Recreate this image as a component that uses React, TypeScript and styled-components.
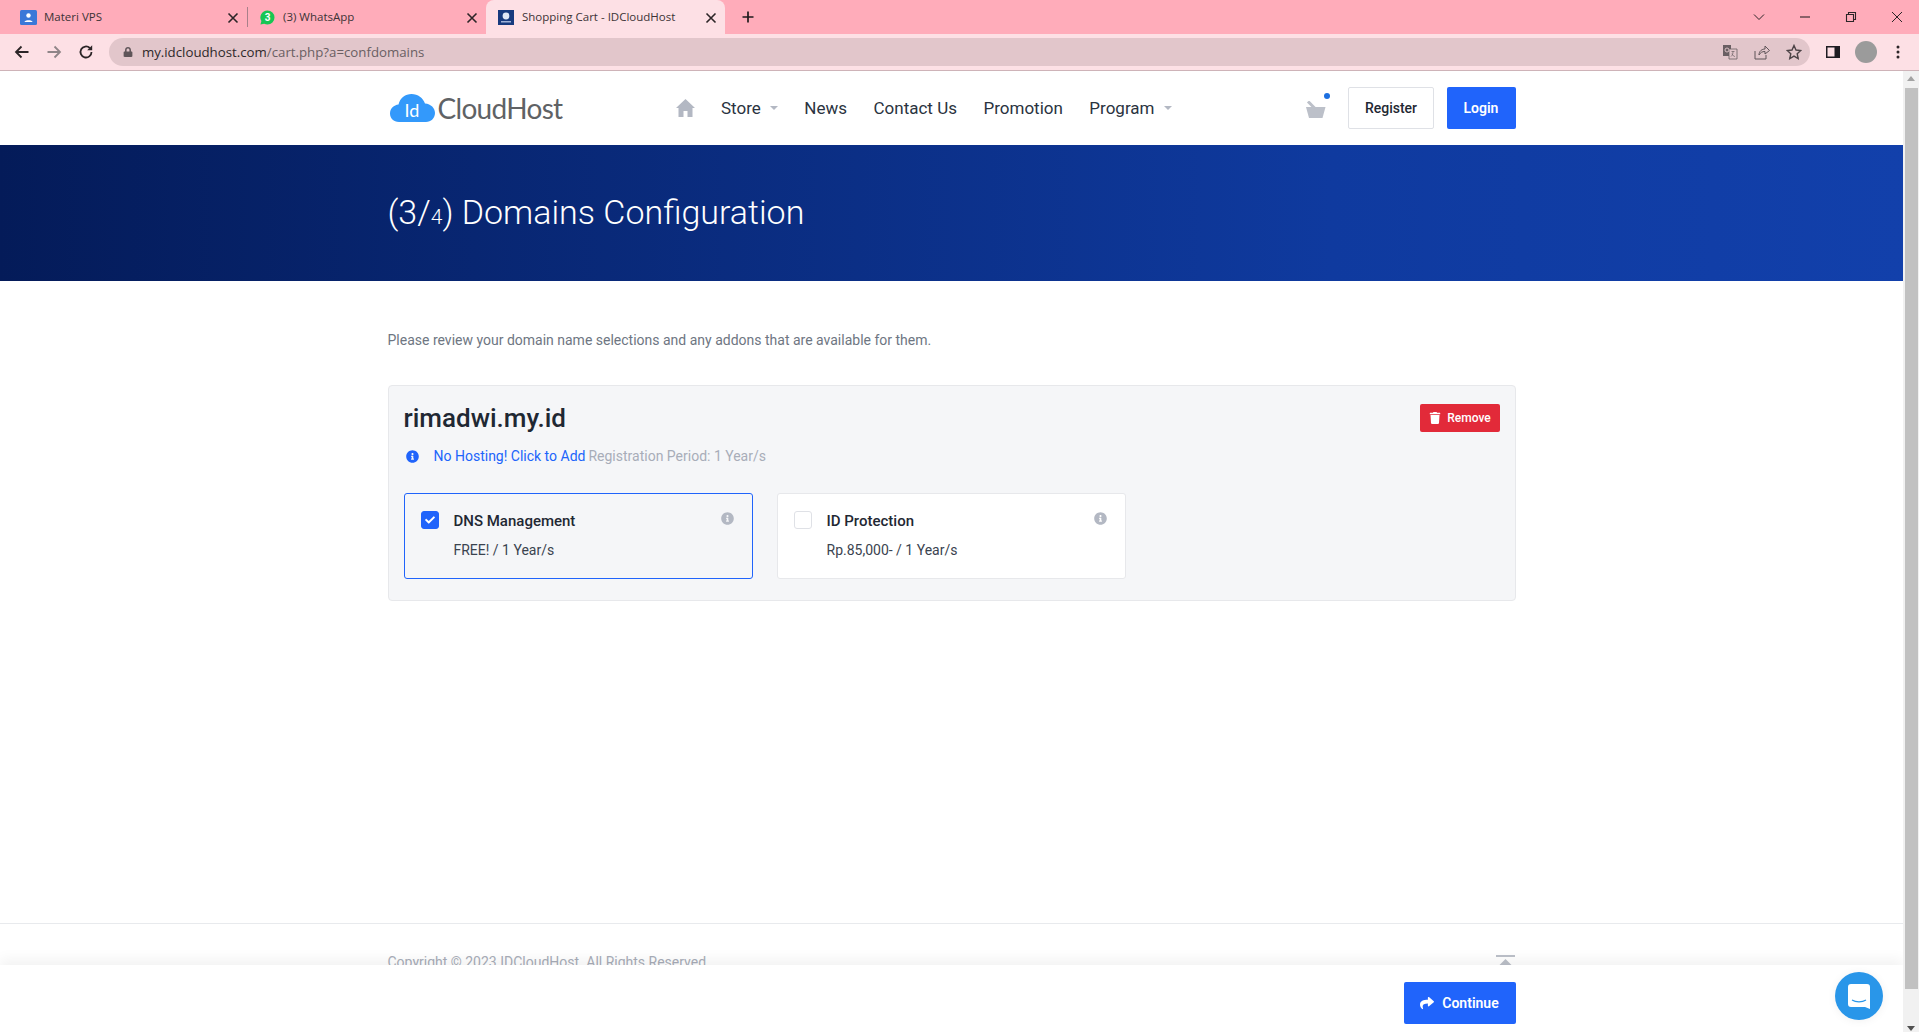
import React from "react";
import styled, { createGlobalStyle } from "styled-components";
import { FaInfoCircle, FaTrash, FaShare, FaCheck, FaLock } from "react-icons/fa";

const Global = createGlobalStyle`
  html, body { margin: 0; padding: 0; height: 100%; overflow: hidden; background: #fff; }
  * { box-sizing: border-box; }
  body { font-family: Roboto, "Liberation Sans", sans-serif; }
`;

const Window = styled.div`
  width: 1919px; height: 1032px; display: flex; flex-direction: column; overflow: hidden;
`;

const TabStrip = styled.div`
  height: 34px; flex: none; background: #ffacba; display: flex; align-items: flex-end; padding-left: 8px;
  font-family: "Open Sans", "Liberation Sans", sans-serif;
`;
const Tab = styled.div<{ $active?: boolean; $width: number; $gap: number }>`
  width: ${p => p.$width}px; height: 34px; display: flex; align-items: center; padding-left: 12px; padding-right: 10px;
  gap: ${p => p.$gap}px; font-size: 11.5px; color: #3c3336; flex: none; position: relative;
  background: ${p => (p.$active ? "#fde0e5" : "transparent")};
  border-radius: ${p => (p.$active ? "8px 8px 0 0" : "0")};
`;
const TabTitle = styled.span`
  flex: 1; white-space: nowrap; overflow: hidden; margin-top: -2px;
`;
const TabClose = styled.span`
  width: 10px; height: 10px; display: flex; flex: none;
`;
const TabDivider = styled.span`
  width: 1px; height: 20px; background: #a8808a; flex: none; align-self: center;
`;
const NewTab = styled.span`
  margin-left: 17px; align-self: center; display: flex;
`;
const WindowControls = styled.div`
  margin-left: auto; display: flex; height: 34px; align-items: center; padding-right: 16px; gap: 34px;
`;
const ControlIcon = styled.svg`
  width: 12px; height: 12px; flex: none; display: block;
`;

const Toolbar = styled.div`
  height: 37px; flex: none; background: #fde0e5; border-bottom: 1px solid #ceb3b8; display: flex; align-items: center;
  padding: 0 13px;
`;
const NavIcons = styled.div`
  display: flex; gap: 16px; align-items: center; width: 96px; padding-left: 1px;
`;
const ToolIcon = styled.svg`
  width: 16px; height: 16px; display: block; flex: none;
`;
const Omnibox = styled.div`
  width: 1703px; height: 28px; border-radius: 14px; background: #e2c6cb; display: flex; align-items: center;
  padding: 0 8px 0 14px; color: #3e3538; font-family: "Open Sans", "Liberation Sans", sans-serif; font-size: 13.25px;
`;
const LockWrap = styled.span`
  display: flex; color: #5f5559; font-size: 10px; margin-right: 9px;
`;
const UrlHost = styled.span` color: #2e282a; `;
const UrlPath = styled.span` color: #6a5f63; `;
const OmniIcons = styled.div`
  margin-left: auto; display: flex; align-items: center; gap: 16px; color: #5f5559;
`;
const ToolbarRight = styled.div`
  display: flex; align-items: center; margin-left: 15px;
`;
const Avatar = styled.span`
  width: 22px; height: 22px; border-radius: 50%; background: #9b9b9b; margin: 0 13px 0 14px; flex: none;
`;

const Viewport = styled.div`
  flex: 1; display: flex; min-height: 0;
`;
const Page = styled.div`
  flex: 1; position: relative; overflow: hidden; background: #fff; color: #1f2833;
`;
const Scrollbar = styled.div`
  width: 16px; flex: none; background: #f1f1f1; display: flex; flex-direction: column; align-items: center; padding-top: 5px;
`;
const ScrollArrowUp = styled.span`
  width: 0; height: 0; border-left: 4px solid transparent; border-right: 4px solid transparent; border-bottom: 5px solid #a3a3a3; flex: none;
`;
const ScrollThumb = styled.span`
  width: 13px; height: 901px; background: #c1c1c1; margin-top: 7px; flex: none; margin-left: 1px;
`;
const ScrollArrowDown = styled.span`
  width: 0; height: 0; border-left: 4px solid transparent; border-right: 4px solid transparent; border-top: 5px solid #505050; margin-top: auto; flex: none; margin-bottom: 1px;
`;

const Container = styled.div`
  width: 1128px; margin: 0 auto;
`;
const HeaderBar = styled.header`
  height: 74px;
`;
const HeaderInner = styled(Container)`
  height: 100%; display: flex; align-items: center;
`;
const Logo = styled.div`
  width: 177px; display: flex; align-items: center; flex: none; padding-left: 2px; margin-bottom: 1px;
`;
const LogoWord = styled.span`
  font-family: Lato, "Open Sans", sans-serif; font-size: 28px; color: #5f6265; letter-spacing: -0.7px; margin-left: 3px; font-weight: 400; line-height: 1;
`;
const Nav = styled.nav`
  display: flex; align-items: center; margin-left: 111px; gap: 26.5px; font-size: 17px; color: #2a3340;
`;
const NavItem = styled.span`
  display: flex; align-items: center; white-space: nowrap;
`;
const HomeGlyph = styled.svg`
  width: 19px; height: 18px; display: block;
`;
const Caret = styled.span`
  width: 0; height: 0; border-left: 4px solid transparent; border-right: 4px solid transparent; border-top: 4px solid #b3b8c3; margin-left: 9px;
`;
const HeaderRight = styled.div`
  margin-left: auto; display: flex; align-items: center;
`;
const CartWrap = styled.span`
  position: relative; width: 20px; height: 17px; margin-right: 22px; display: block; margin-top: 3px;
`;
const CartDot = styled.span`
  position: absolute; right: -4px; top: -8px; width: 6px; height: 6px; border-radius: 50%; background: #1c6fe0;
`;
const OutlineButton = styled.span`
  width: 86px; height: 42px; background: #fff; border: 1px solid #dfe1e6; border-radius: 2px; display: flex; align-items: center; justify-content: center;
  font-size: 14px; font-weight: 500; color: #1f2833; margin-right: 13px; padding: 0 0 1px 1px;
`;
const PrimaryButton = styled.span<{ $width: number }>`
  width: ${p => p.$width}px; height: 42px; background: #2064fb; border-radius: 2px; display: flex; align-items: center; justify-content: center; gap: 8px;
  font-size: 14px; font-weight: 600; color: #fff; padding-bottom: 1px;
`;

const Hero = styled.section`
  height: 136px; background: linear-gradient(90deg, #041b59 0%, #0f3a9f 70%, #1240ab 100%); display: flex; align-items: center; padding-bottom: 2px;
`;
const HeroTitle = styled.h1`
  margin: 0; font-weight: 300; font-size: 34px; color: #fff; line-height: 1; letter-spacing: 0;
`;
const SmallDigit = styled.span`
  font-size: 21px;
`;

const Content = styled.main`
  height: 642px; padding-top: 51px;
`;
const Intro = styled.p`
  margin: 0 0 37px; font-size: 14px; line-height: 16px; color: #6e7682;
`;
const DomainCard = styled.div`
  height: 216px; background: #f5f6f8; border: 1px solid #e7e8eb; border-radius: 4px; padding: 17px 15px 16px;
`;
const DomainHead = styled.div`
  display: flex; justify-content: space-between; align-items: flex-start; height: 31px;
`;
const DomainName = styled.h2`
  margin: 0; font-size: 26px; font-weight: 500; color: #1f2833; line-height: 31px;
`;
const DangerButton = styled.span`
  width: 80px; height: 28px; background: #e22a39; border-radius: 2px; color: #fff; font-size: 12px; font-weight: 500; margin-top: 1px;
  display: flex; align-items: center; justify-content: center; gap: 6px; padding-left: 1px;
`;
const StatusRow = styled.div`
  display: flex; align-items: center; margin-top: 14px; font-size: 14px; line-height: 16px;
`;
const StatusIcon = styled(FaInfoCircle)`
  color: #2064fb; font-size: 13px; margin: 0 15px 0 2px; flex: none;
`;
const AddLink = styled.span`
  color: #2064fb; margin-right: 3px;
`;
const Period = styled.span`
  color: #a8adb8;
`;
const Addons = styled.div`
  display: flex; gap: 24px; margin-top: 29px;
`;
const AddonBox = styled.div<{ $selected?: boolean }>`
  width: 349px; height: 86px; border-radius: 3px; padding: 17px 18px 0 16px; display: grid; grid-template-columns: 18px 1fr 13px; column-gap: 15px; row-gap: 11px; align-content: start;
  border: 1px solid ${p => (p.$selected ? "#2064fb" : "#e7e8eb")};
  background: ${p => (p.$selected ? "transparent" : "#fff")};
`;
const Check = styled.span<{ $checked?: boolean }>`
  width: 18px; height: 18px; border-radius: 3px; display: flex; align-items: center; justify-content: center; color: #fff; font-size: 10px;
  background: ${p => (p.$checked ? "#2064fb" : "#fff")};
  border: 1px solid ${p => (p.$checked ? "#2064fb" : "#dfe1e6")};
`;
const AddonTitle = styled.span`
  font-size: 15px; font-weight: 500; color: #1f2833; line-height: 20px;
`;
const AddonInfo = styled(FaInfoCircle)`
  color: #b3b8c3; font-size: 13px; margin-top: 1px;
`;
const AddonPrice = styled.span`
  grid-column: 2 / 4; font-size: 14px; color: #3a434f; line-height: 16px;
`;

const FooterBar = styled.footer`
  border-top: 1px solid #e8eaed; height: 120px; padding-top: 30px;
`;
const FooterInner = styled(Container)`
  display: flex; justify-content: space-between; align-items: flex-start;
`;
const Copyright = styled.span`
  font-size: 14px; line-height: 16px; color: #a8adb8;
`;
const BackTop = styled.svg`
  width: 19px; height: 14px; display: block; margin-top: 1px; margin-right: 1px;
`;

const StickyBar = styled.div`
  position: absolute; left: 0; right: 0; bottom: 0; height: 67px; background: #fff; box-shadow: 0 -6px 12px rgba(0,0,0,0.05);
`;
const StickyInner = styled(Container)`
  display: flex; justify-content: flex-end; padding-top: 17px;
`;
const ChatBubble = styled.div`
  position: absolute; left: 1835px; top: 901px; width: 48px; height: 48px; border-radius: 50%; background: #2996e9; display: flex; align-items: center; justify-content: center;
  box-shadow: 0 1px 10px rgba(0,0,0,0.06);
`;

const X = ({ w = 1.6, c = "#2c2527" }: { w?: number; c?: string }) => (
  <ControlIcon viewBox="0 0 12 12"><path d="M1.5 1.5l9 9M10.5 1.5l-9 9" stroke={c} strokeWidth={w} fill="none" /></ControlIcon>
);

export default function App() {
  return (
    <>
      <Global />
      <Window>
        <TabStrip>
          <Tab $width={239} $gap={7}>
            <svg width="17" height="15" viewBox="0 0 17 15"><rect width="17" height="15" rx="1.5" fill="#3b78d8" /><circle cx="8.5" cy="5.5" r="2.2" fill="#fff" /><path d="M4.5 12c0-2.4 8-2.4 8 0z" fill="#fff" /></svg>
            <TabTitle>Materi VPS</TabTitle>
            <TabClose><X /></TabClose>
          </Tab>
          <TabDivider />
          <Tab $width={238} $gap={8}>
            <svg width="15" height="15" viewBox="0 0 15 15"><path d="M7.5 0.5a7 7 0 0 1 0 14c-1.2 0-2.3-.3-3.3-.8L.5 14.5l.9-3.4A7 7 0 0 1 7.5.5z" fill="#17c653" /><text x="7.5" y="11" textAnchor="middle" fontSize="10" fontWeight="700" fill="#fff" fontFamily="Roboto, sans-serif">3</text></svg>
            <TabTitle>(3) WhatsApp</TabTitle>
            <TabClose><X /></TabClose>
          </Tab>
          <Tab $active $width={239} $gap={8}>
            <svg width="16" height="15" viewBox="0 0 16 15"><rect width="16" height="15" fill="#173a7e" /><circle cx="8" cy="6" r="3.4" fill="#dfe7f5" /><rect x="3" y="11" width="10" height="1.5" fill="#9fb2d8" /></svg>
            <TabTitle>Shopping Cart - IDCloudHost</TabTitle>
            <TabClose><X /></TabClose>
          </Tab>
          <NewTab>
            <ControlIcon viewBox="0 0 12 12"><path d="M6 0.5v11M0.5 6h11" stroke="#1f1a1c" strokeWidth="1.7" fill="none" /></ControlIcon>
          </NewTab>
          <WindowControls>
            <ControlIcon viewBox="0 0 12 12"><path d="M1 3.5l5 5 5-5" stroke="#2c2527" strokeWidth="1" fill="none" /></ControlIcon>
            <ControlIcon viewBox="0 0 12 12"><path d="M1 6h10" stroke="#2c2527" strokeWidth="1.1" fill="none" /></ControlIcon>
            <ControlIcon viewBox="0 0 12 12"><path d="M1.5 3.5h7v7h-7zM3.5 3.5v-2h7v7h-2" stroke="#2c2527" strokeWidth="1.1" fill="none" /></ControlIcon>
            <ControlIcon viewBox="0 0 12 12"><path d="M1 1l10 10M11 1L1 11" stroke="#2c2527" strokeWidth="1" fill="none" /></ControlIcon>
          </WindowControls>
        </TabStrip>
        <Toolbar>
          <NavIcons>
            <ToolIcon viewBox="0 0 16 16"><path d="M14.5 8H2.5M7.5 2.5L2 8l5.5 5.5" stroke="#2c2527" strokeWidth="1.8" fill="none" /></ToolIcon>
            <ToolIcon viewBox="0 0 16 16"><path d="M1.5 8h12M8.5 2.5L14 8l-5.5 5.5" stroke="#8f8588" strokeWidth="1.8" fill="none" /></ToolIcon>
            <ToolIcon viewBox="0 0 16 16"><path d="M13.5 8a5.5 5.5 0 1 1-1.7-4" stroke="#2c2527" strokeWidth="1.8" fill="none" /><path d="M14.2 1.2v5h-5z" fill="#2c2527" /></ToolIcon>
          </NavIcons>
          <Omnibox>
            <LockWrap><FaLock /></LockWrap>
            <span><UrlHost>my.idcloudhost.com</UrlHost><UrlPath>/cart.php?a=confdomains</UrlPath></span>
            <OmniIcons>
              <ToolIcon viewBox="0 0 16 16"><path d="M1 1h8v11H1z" fill="#6a5f63" /><path d="M7 5h8v10H7z" fill="#e2c6cb" stroke="#6a5f63" strokeWidth="0.8" /><path d="M9.5 7.5h3M11 7.5c0 3-1 4-2 5M10 9.5c.5 2 2 3 3 3" stroke="#6a5f63" strokeWidth="0.7" fill="none" /><circle cx="5" cy="6" r="2" fill="none" stroke="#e2c6cb" strokeWidth="0.9" /></ToolIcon>
              <ToolIcon viewBox="0 0 16 16"><path d="M1 7v8h11v-4" stroke="#5f5559" strokeWidth="1" fill="none" /><path d="M5 11c0-4 3-6 6-6V2l4.5 4.5L11 10V7.5c-3 0-4.5 1-6 3.5z" stroke="#5f5559" strokeWidth="1" fill="none" /></ToolIcon>
              <ToolIcon viewBox="0 0 16 16"><path d="M8 1.5l2 4.5 4.8.5-3.6 3.2 1 4.8L8 12.1 3.8 14.5l1-4.8L1.2 6.5 6 6z" stroke="#4c4346" strokeWidth="1.4" fill="none" /></ToolIcon>
            </OmniIcons>
          </Omnibox>
          <ToolbarRight>
            <ToolIcon viewBox="0 0 16 16"><rect x="1" y="2" width="14" height="12" fill="#1f1c22" /><rect x="2.5" y="3.5" width="7" height="9" fill="#fde0e5" /></ToolIcon>
            <Avatar />
            <ToolIcon viewBox="0 0 16 16"><circle cx="8" cy="3" r="1.5" fill="#2c2527" /><circle cx="8" cy="8" r="1.5" fill="#2c2527" /><circle cx="8" cy="13" r="1.5" fill="#2c2527" /></ToolIcon>
          </ToolbarRight>
        </Toolbar>
        <Viewport>
          <Page>
            <HeaderBar>
              <HeaderInner>
                <Logo>
                  <svg width="45" height="28" viewBox="0 0 45 28">
                    <path d="M9 28C3.5 28 0 24 0 19.5 0 14.5 4 11 8.5 10.5 10 4 15.5 0 21.5 0 28 0 33 4 35 9.5 41 10 45 14 45 19 45 24 41 28 36 28z" fill="#3399fb" />
                    <text x="22" y="23" textAnchor="middle" fontFamily="Lato, sans-serif" fontSize="18" fill="#fff" fontWeight="400">Id</text>
                  </svg>
                  <LogoWord>CloudHost</LogoWord>
                </Logo>
                <Nav>
                  <NavItem><HomeGlyph viewBox="0 0 19 18"><path d="M9.5 0L19 9h-2.5v9h-5v-6h-4v6h-5V9H0z" fill="#b3b8c3" /></HomeGlyph></NavItem>
                  <NavItem>Store<Caret /></NavItem>
                  <NavItem>News</NavItem>
                  <NavItem>Contact Us</NavItem>
                  <NavItem>Promotion</NavItem>
                  <NavItem>Program<Caret /></NavItem>
                </Nav>
                <HeaderRight>
                  <CartWrap>
                    <svg width="20" height="17" viewBox="0 0 20 17"><path d="M0 6h19.500l-3 11H3z" fill="#bcc0c9" /><path d="M2 0.5l7 7" stroke="#bcc0c9" strokeWidth="3" /></svg>
                    <CartDot />
                  </CartWrap>
                  <OutlineButton>Register</OutlineButton>
                  <PrimaryButton $width={69}>Login</PrimaryButton>
                </HeaderRight>
              </HeaderInner>
            </HeaderBar>
            <Hero>
              <Container>
                <HeroTitle>(3/<SmallDigit>4</SmallDigit>) Domains Configuration</HeroTitle>
              </Container>
            </Hero>
            <Content>
              <Container>
                <Intro>Please review your domain name selections and any addons that are available for them.</Intro>
                <DomainCard>
                  <DomainHead>
                    <DomainName>rimadwi.my.id</DomainName>
                    <DangerButton><FaTrash />Remove</DangerButton>
                  </DomainHead>
                  <StatusRow>
                    <StatusIcon />
                    <AddLink>No Hosting! Click to Add</AddLink>
                    <Period>Registration Period: 1 Year/s</Period>
                  </StatusRow>
                  <Addons>
                    <AddonBox $selected>
                      <Check $checked><FaCheck /></Check>
                      <AddonTitle>DNS Management</AddonTitle>
                      <AddonInfo />
                      <AddonPrice>FREE! / 1 Year/s</AddonPrice>
                    </AddonBox>
                    <AddonBox>
                      <Check />
                      <AddonTitle>ID Protection</AddonTitle>
                      <AddonInfo />
                      <AddonPrice>Rp.85,000- / 1 Year/s</AddonPrice>
                    </AddonBox>
                  </Addons>
                </DomainCard>
              </Container>
            </Content>
            <FooterBar>
              <FooterInner>
                <Copyright>Copyright © 2023 IDCloudHost. All Rights Reserved.</Copyright>
                <BackTop viewBox="0 0 19 14"><rect x="0" y="0" width="19" height="2" fill="#bcc0c9" /><path d="M9.5 4l6 6h-12z" fill="#bcc0c9" /><rect x="6" y="10" width="7" height="4" fill="#bcc0c9" /></BackTop>
              </FooterInner>
            </FooterBar>
            <StickyBar>
              <StickyInner>
                <PrimaryButton $width={112}><FaShare />Continue</PrimaryButton>
              </StickyInner>
            </StickyBar>
            <ChatBubble>
              <svg width="22" height="25" viewBox="0 0 22 25"><path d="M3 0h16a3 3 0 0 1 3 3v22l-5-2H3a3 3 0 0 1-3-3V3a3 3 0 0 1 3-3z" fill="#fff" /><path d="M4 16c4 2.5 10 2.5 14 0" stroke="#2996e9" strokeWidth="1.2" fill="none" /></svg>
            </ChatBubble>
          </Page>
          <Scrollbar>
            <ScrollArrowUp />
            <ScrollThumb />
            <ScrollArrowDown />
          </Scrollbar>
        </Viewport>
      </Window>
    </>
  );
}
